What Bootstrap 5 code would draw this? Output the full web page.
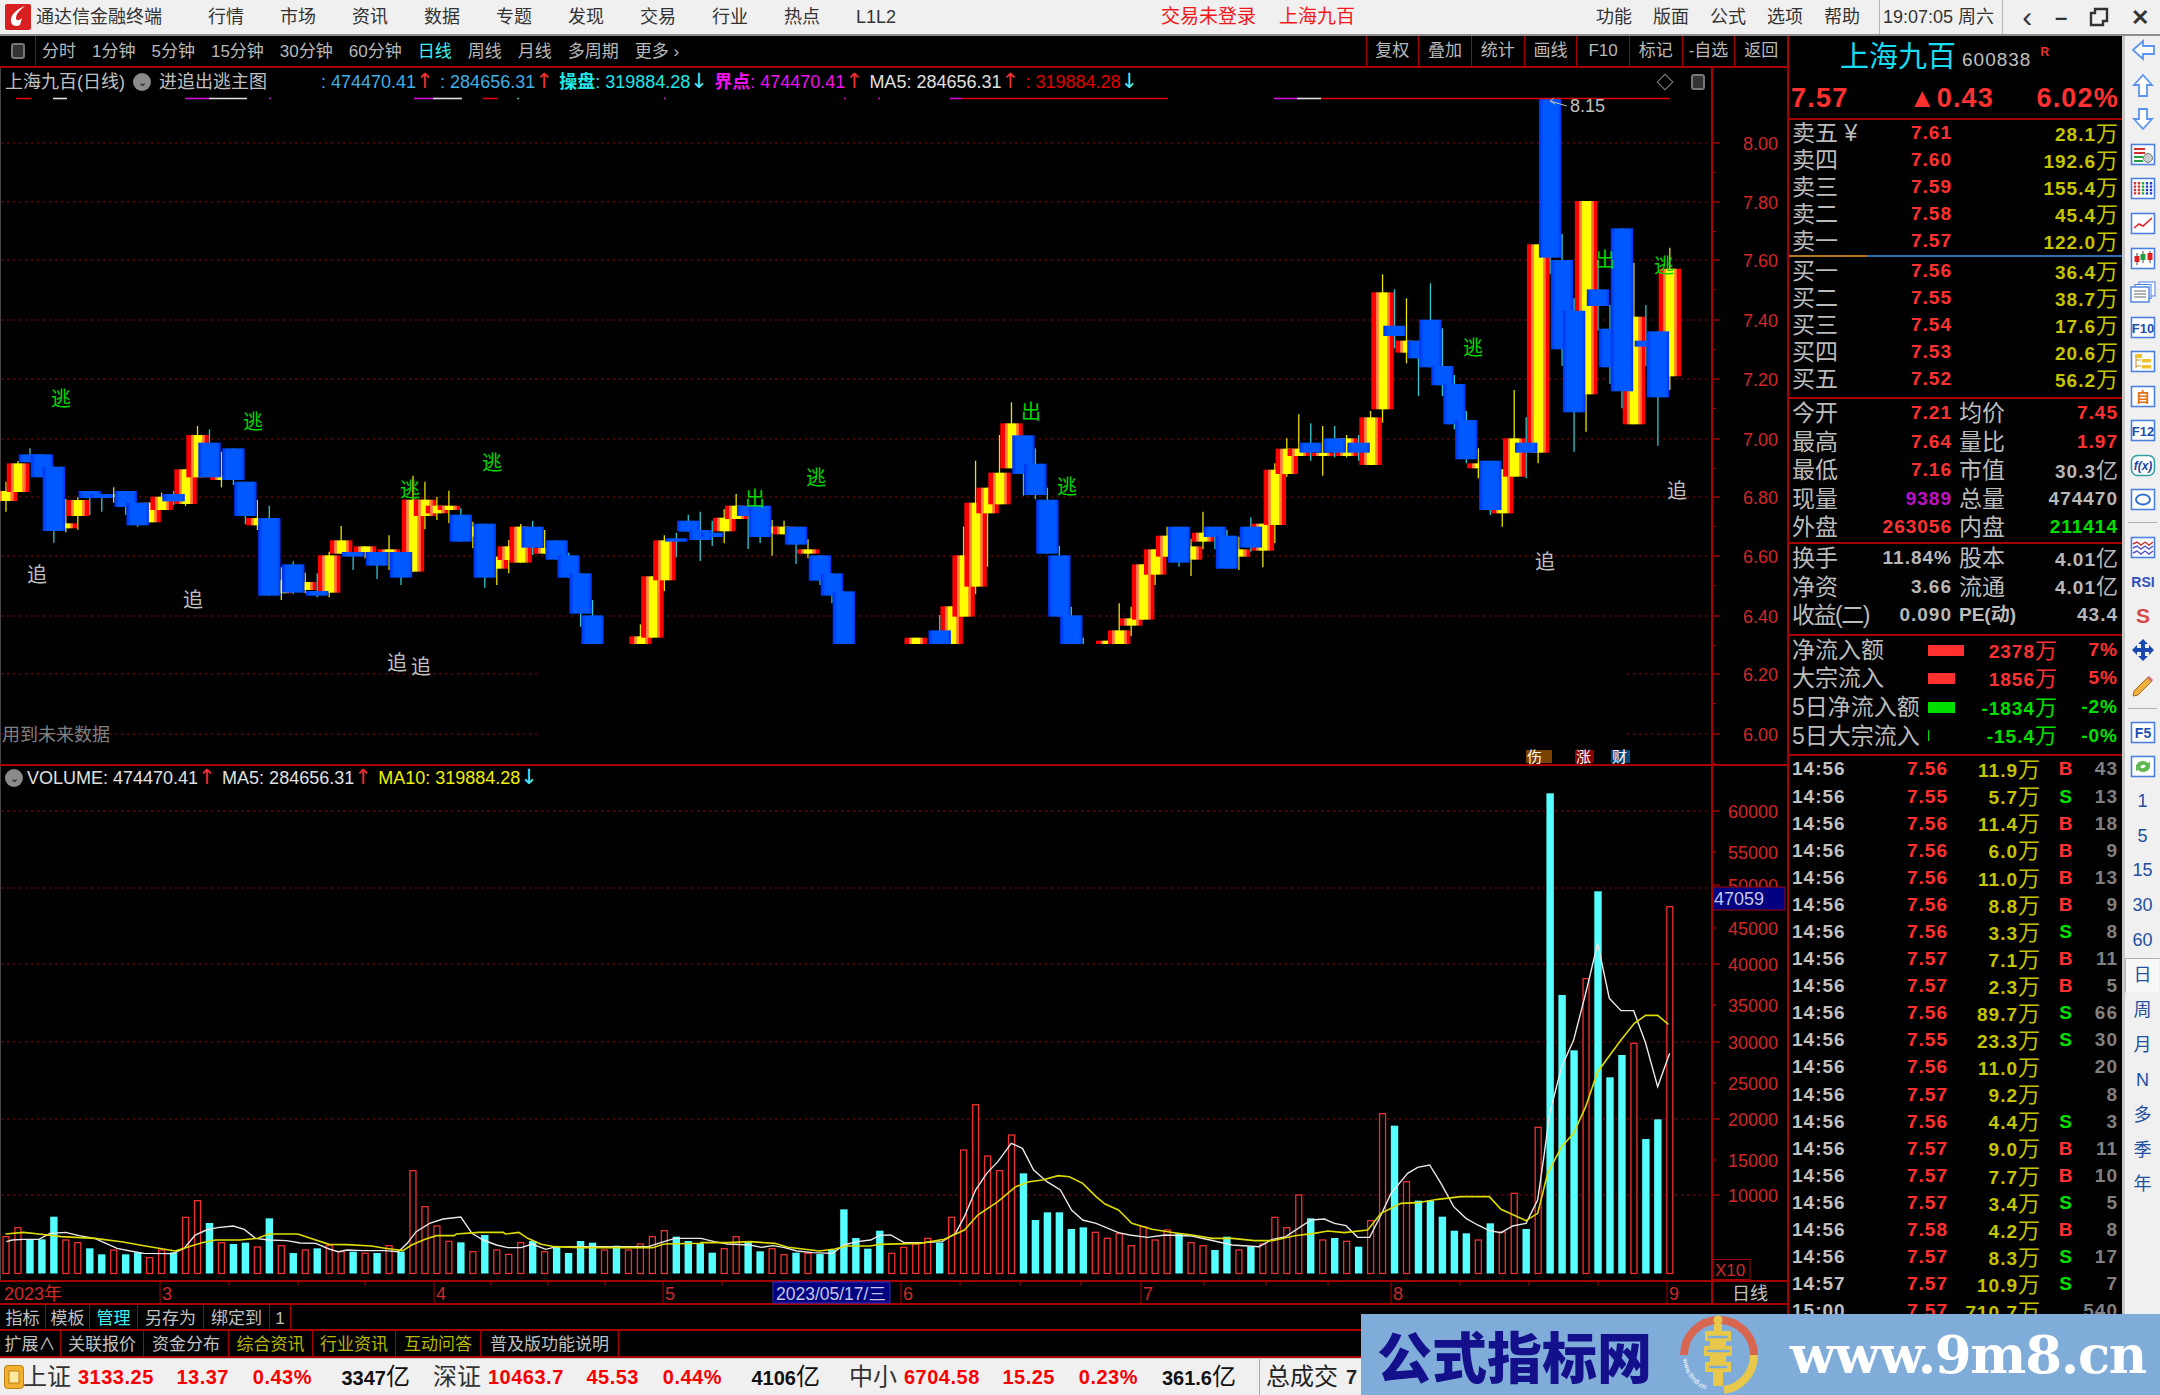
<!DOCTYPE html>
<html lang="zh-CN">
<head>
<meta charset="UTF-8">
<title>通达信金融终端</title>
<link href="https://cdn.jsdelivr.net/npm/bootstrap@5.3.0/dist/css/bootstrap.min.css" rel="stylesheet">
<style>
:root { --line: #a80000; --cjk: "Liberation Sans", "Noto Sans CJK SC", sans-serif; }
html, body { margin: 0; width: 2160px; height: 1395px; overflow: hidden; background: #000; }
body { font-family: var(--cjk); color: #c0c0c0; font-size: 17px; position: relative; }
svg { display: block; overflow: visible; }
svg text { font-family: var(--cjk); }

/* title bar */
.top-bar { height: 36px; background: #f0f0f0; border-bottom: 2px solid #8c8c8c; color: #333; font-size: 18px; flex-wrap: nowrap; justify-content: flex-start; }
.app-name { width: 203px; margin-left: 5px; gap: 5px; }
.menu-left { gap: 36px; }
.top-login { position: relative; color: #f01818; gap: 23px; margin-left: 265px; font-size: 19px; }
.menu-right { gap: 21px; margin-left: auto; }
.clock { border-left: 1px solid #b8b8b8; border-right: 1px solid #b8b8b8; height: 34px; margin-left: 19px; padding: 0 3px; width: 124px; font-size: 18px; white-space: nowrap; }
.win-ctl { width: 157px; justify-content: space-around; font-size: 22px; font-weight: 700; color: #333; padding-left: 8px; }
.win-back { font-size: 30px; font-weight: 400; line-height: 34px; height: 34px; }

/* chart toolbar */
.work { height: 1322px; }
.left-col { width: 1787px; }
.tool-row { height: 32px; border-bottom: 2px solid var(--line); font-size: 17px; color: #b8b8b8; }
.tool-icon { width: 36px; height: 30px; border-right: 1px solid var(--line); }
.tool-left { gap: 16px; margin-left: 6px; padding-top: 1px; }
.tool-on { color: #40f0f0; }
.tool-right { margin-left: auto; }
.tool-right span { height: 30px; width: 52.7px; border-left: 1px solid var(--line); display: flex; align-items: center; justify-content: center; }

/* chart panes */
.main-pane { height: 698px; border-bottom: 2px solid var(--line); }
.vol-pane { height: 516px; border-bottom: 2px solid var(--line); }
.plot-col { width: 1711px; border-left: 1px solid #444; }
.chart-title { height: 28px; font-size: 18px; white-space: nowrap; }
.vol-title { height: 24px; font-size: 18px; white-space: nowrap; }
.chip-dot { width: 18px; height: 18px; border-radius: 50%; background: #8a8a8a; color: #111; font-size: 11px; line-height: 18px; text-align: center; flex: none; }
.num-blue { color: #3fb0e8; } .num-cyan { color: #20e8e8; } .num-mag { color: #f010f0; } .num-red { color: #e00000; } .num-yel { color: #f0f000; } .num-wht { color: #e0e0e0; }
.arr-up, .arr-dn { font-family: "DejaVu Sans", sans-serif; font-size: 21px; font-weight: 400; line-height: 1; display: inline-block; width: 12px; text-align: center; overflow: visible; }
.arr-up { color: #f03030; } .arr-dn { color: #50e8f8; }
.seg { position: relative; flex: none; }
.seg-gap { margin-left: 12px; }
.seg-box { width: 14px; height: 16px; border: 2px solid #777; border-radius: 3px; background: #333; }
.diam { width: 12px; height: 12px; border: 1px solid #888; transform: rotate(45deg); }
.date-row { height: 23px; border-bottom: 2px solid var(--line); }
.date-cell { width: 76px; border-left: 2px solid var(--line); border-right: 0; color: #c0c0c0; font-size: 18px; line-height: 24px; text-align: center; }
.tab-row { height: 26px; border-bottom: 2px solid var(--line); font-size: 17px; }
.tab-row2 { height: 27px; }
.tab-row span { border-right: 1px solid var(--line); display: flex; align-items: center; justify-content: center; height: 100%; flex: none; padding-top: 3px; }
.tab-olive { color: #b8b800; }

/* quote panel */
.quote-panel { width: 335px; border-left: 2px solid var(--line); overflow: hidden; font-size: 23px; }
.q-head { height: 48px; gap: 6px; padding-bottom: 5px; }
.q-name { color: #18dcf0; font-size: 29px; margin-left: 51px; }
.q-code { color: #c0c0c0; font-size: 19px; letter-spacing: 1px; margin-top: 6px; }
.q-r { color: #f03030; font-size: 12px; font-weight: 700; margin: -12px 0 0 3px; }
.q-price { height: 36px; border-bottom: 2px solid var(--line); color: #ff3030; font-weight: 700; font-size: 27px; padding: 0 3px 5px 2px; letter-spacing: 1.2px; }
.q-row { display: flex; align-items: center; height: 27px; padding: 0 4px 0 3px; }
.q-num { font-weight: 700; font-size: 19px; letter-spacing: 1px; }
.q-lab { width: 100px; color: #bcbcbc; flex: none; }
.q-pr { width: 60px; text-align: right; color: #ff3030; flex: none; }
.q-vol { flex: 1; text-align: right; color: #c4c400; }
.q-wan { font-weight: 400; font-size: 22px; letter-spacing: 0; }
.q-split { height: 2px; background: linear-gradient(90deg, #b07820 78px, #2a70b0 78px); margin-bottom: 1px; }
.q-end { border-bottom: 2px solid var(--line); }
.st-row { height: 28.6px; }
.st-lab { width: 90px; color: #bcbcbc; flex: none; white-space: nowrap; }
.st-val { width: 70px; text-align: right; flex: none; white-space: nowrap; }
.st-lab2 { width: 70px; margin-left: 7px; color: #bcbcbc; flex: none; white-space: nowrap; }
.st-val2 { flex: 1; text-align: right; white-space: nowrap; }
.pe-lab { font-size: 19px; font-weight: 700; }
.eps-lab { letter-spacing: -1.5px; }
.c-red { color: #ff3030; } .c-mag { color: #c010c8; } .c-grn { color: #00e000; } .c-gry { color: #b8b8b8; }
.fl-lab { width: 136px; color: #bcbcbc; flex: none; white-space: nowrap; }
.fl-bar { width: 44px; flex: none; }
.fl-bar b { display: block; height: 11px; }
.fl-amt { width: 85px; text-align: right; flex: none; white-space: nowrap; }
.fl-pct { flex: 1; text-align: right; }
.tr-row { display: flex; align-items: center; height: 27.1px; padding: 0 4px 0 3px; }
.tr-time { width: 66px; color: #c0c0c0; flex: none; }
.tr-pr { width: 90px; text-align: right; color: #ff3030; flex: none; }
.tr-vol { width: 92px; text-align: right; color: #c4c400; flex: none; white-space: nowrap; }
.tr-bs { width: 26px; margin-left: 13px; text-align: center; flex: none; }
.tr-ct { flex: 1; text-align: right; color: #808080; }

/* side rail */
.side-rail { width: 38px; background: #f0f0f0; border-left: 3px solid #c8c8c8; }
.rail-cell { height: 34.55px; color: #2050a0; font-size: 18px; display: flex; align-items: center; justify-content: center; flex: none; }
.rail-num { height: 34.9px; }
.rail-first { margin-top: -3px; }
.rail-sep { height: 12.6px; display: flex; align-items: center; flex: none; padding: 0 3px; }
.rail-sep::after { content: ""; display: block; width: 100%; height: 1px; background: #b0b0b0; }
.rail-on { border: 1px solid #b0b0b0; border-right-color: #eee; border-bottom-color: #eee; background: #f8f8f8; }

/* status bar */
.status-bar { height: 37px; background: #f0f0f0; color: #222; font-size: 24px; white-space: nowrap; border-top: 1px solid #d0d0d0; }
.st-group { display: flex; align-items: center; flex: none; }
.st-name { width: 55px; flex: none; color: #333; }
.st-a { width: 78px; flex: none; }
.st-b { width: 73px; text-align: right; flex: none; }
.st-c { width: 83px; text-align: right; flex: none; }
.st-d { width: 98px; text-align: right; flex: none; font-weight: 700; font-size: 20px; color: #111; }
.st-d em { font-style: normal; font-weight: 400; font-size: 24px; }
.st-red { color: #f80000; font-weight: 700; font-size: 20px; letter-spacing: .5px; }

/* site stamp */
.site-stamp { position: absolute; left: 1361px; top: 1314px; width: 799px; height: 81px; background: #7facd9; display: flex; align-items: center; }
.stamp-cn { font-family: "Noto Sans CJK SC", sans-serif; font-weight: 900; color: #14108c; font-size: 55px; margin-left: 16px; width: 304px; letter-spacing: 0; line-height: 1; }
.stamp-logo { margin-left: -3px; flex: none; }
.stamp-url { font-family: "DejaVu Serif", serif; font-weight: 700; color: #fff; font-size: 53px; margin-left: 30px; letter-spacing: -1.3px; line-height: 1; white-space: nowrap; }
</style>
</head>
<body>

<nav class="navbar navbar-expand p-0 top-bar">
  <div class="d-flex align-items-center app-name">
    <svg width="26" height="26" viewBox="0 0 26 26"><rect width="26" height="26" rx="2" fill="#d82020"/><path d="M20 2 C10 6 5 12 6 18 C7 22 11 23 15 21 L17 14 C14 17 11 17 11 14 C11 10 15 6 20 2Z" fill="#fff"/></svg>
    <span>通达信金融终端</span>
  </div>
  <div class="d-flex menu-left">
    <span>行情</span><span>市场</span><span>资讯</span><span>数据</span><span>专题</span><span>发现</span><span>交易</span><span>行业</span><span>热点</span><span>L1L2</span>
  </div>
  <div class="d-flex top-login"><span>交易未登录</span><span>上海九百</span></div>
  <div class="d-flex menu-right"><span>功能</span><span>版面</span><span>公式</span><span>选项</span><span>帮助</span></div>
  <div class="d-flex align-items-center clock"><span>19:07:05 周六</span></div>
  <div class="d-flex align-items-center win-ctl">
    <span class="win-back">‹</span><span>–</span>
    <svg width="18" height="18" viewBox="0 0 18 18"><path d="M5 1h12v12h-4v4H1V5h4z" fill="none" stroke="#333" stroke-width="2.4"/></svg>
    <span>✕</span>
  </div>
</nav>

<div class="d-flex work">
  <div class="left-col d-flex flex-column">
    <div class="d-flex align-items-center tool-row">
      <div class="tool-icon d-flex align-items-center justify-content-center"><div class="seg-box"></div></div>
      <div class="d-flex tool-left">
        <span>分时</span><span>1分钟</span><span>5分钟</span><span>15分钟</span><span>30分钟</span><span>60分钟</span><span class="tool-on">日线</span><span>周线</span><span>月线</span><span>多周期</span><span>更多 ›</span>
      </div>
      <div class="d-flex tool-right"><span>复权</span><span>叠加</span><span>统计</span><span>画线</span><span>F10</span><span>标记</span><span>-自选</span><span>返回</span></div>
    </div>

    <div class="d-flex main-pane">
      <div class="plot-col d-flex flex-column">
        <div class="d-flex align-items-center chart-title">
          <span class="ms-1">上海九百(日线)</span><span class="chip-dot ms-2">⌄</span><span class="ms-2">进追出逃主图</span>
          <span class="num-blue seg" style="margin-left:54px">: 474470.41<span class="arr-up">↑</span></span>
          <span class="num-blue seg seg-gap">: 284656.31<span class="arr-up">↑</span></span>
          <span class="num-cyan seg seg-gap"><b>操盘</b>: 319884.28<span class="arr-dn">↓</span></span>
          <span class="num-mag seg seg-gap"><b>界点</b>: 474470.41<span class="arr-up">↑</span></span>
          <span class="num-wht seg seg-gap">MA5: 284656.31<span class="arr-up">↑</span></span>
          <span class="num-red seg seg-gap">: 319884.28<span class="arr-dn">↓</span></span>
          <span class="diam ms-auto"></span><span class="seg-box" style="margin:0 6px 0 20px"></span>
        </div>
        <svg id="kChart" width="1710" height="668" viewBox="0 96 1710 668"></svg>
      </div>
      <svg id="kAxis" width="76" height="696" viewBox="1711 68 76 696"></svg>
    </div>

    <div class="d-flex vol-pane">
      <div class="plot-col d-flex flex-column">
        <div class="d-flex align-items-center vol-title">
          <span class="chip-dot ms-1">⌄</span>
          <span class="num-wht ms-1">VOLUME: 474470.41<span class="arr-up">↑</span></span>
          <span class="num-wht seg-gap">MA5: 284656.31<span class="arr-up">↑</span></span>
          <span class="num-yel seg-gap">MA10: 319884.28<span class="arr-dn">↓</span></span>
        </div>
        <svg id="vChart" width="1710" height="490" viewBox="0 790 1710 490"></svg>
      </div>
      <svg id="vAxis" width="76" height="514" viewBox="1711 766 76 514"></svg>
    </div>

    <div class="d-flex date-row">
      <svg id="dateAxis" width="1711" height="21" viewBox="0 1282 1711 21"></svg>
      <div class="date-cell">日线</div>
    </div>

    <div class="d-flex tab-row">
      <span style="width:46px">指标</span><span style="width:44px">模板</span><span class="tool-on" style="width:48px">管理</span><span style="width:66px">另存为</span><span style="width:66px">绑定到</span><span style="width:21px">1</span>
    </div>
    <div class="d-flex tab-row tab-row2">
      <span style="width:61px">扩展∧</span><span style="width:83px">关联报价</span><span style="width:85px">资金分布</span><span class="tab-olive" style="width:84px">综合资讯</span><span class="tab-olive" style="width:83px">行业资讯</span><span class="tab-olive" style="width:85px">互动问答</span><span style="width:138px">普及版功能说明</span>
    </div>
  </div>

  <div class="quote-panel">
    <div class="d-flex align-items-center q-head"><span class="q-name">上海九百</span><span class="q-code">600838</span><span class="q-r">R</span></div>
    <div class="d-flex align-items-center justify-content-between q-price"><span>7.57</span><span style="margin-left:18px">▲0.43</span><span>6.02%</span></div>

    <div class="q-row"><span class="q-lab">卖五 ¥</span><span class="q-pr q-num">7.61</span><span class="q-vol q-num">28.1<span class="q-wan">万</span></span></div>
    <div class="q-row"><span class="q-lab">卖四</span><span class="q-pr q-num">7.60</span><span class="q-vol q-num">192.6<span class="q-wan">万</span></span></div>
    <div class="q-row"><span class="q-lab">卖三</span><span class="q-pr q-num">7.59</span><span class="q-vol q-num">155.4<span class="q-wan">万</span></span></div>
    <div class="q-row"><span class="q-lab">卖二</span><span class="q-pr q-num">7.58</span><span class="q-vol q-num">45.4<span class="q-wan">万</span></span></div>
    <div class="q-row"><span class="q-lab">卖一</span><span class="q-pr q-num">7.57</span><span class="q-vol q-num">122.0<span class="q-wan">万</span></span></div>
    <div class="q-split"></div>
    <div class="q-row"><span class="q-lab">买一</span><span class="q-pr q-num">7.56</span><span class="q-vol q-num">36.4<span class="q-wan">万</span></span></div>
    <div class="q-row"><span class="q-lab">买二</span><span class="q-pr q-num">7.55</span><span class="q-vol q-num">38.7<span class="q-wan">万</span></span></div>
    <div class="q-row"><span class="q-lab">买三</span><span class="q-pr q-num">7.54</span><span class="q-vol q-num">17.6<span class="q-wan">万</span></span></div>
    <div class="q-row"><span class="q-lab">买四</span><span class="q-pr q-num">7.53</span><span class="q-vol q-num">20.6<span class="q-wan">万</span></span></div>
    <div class="q-row"><span class="q-lab">买五</span><span class="q-pr q-num">7.52</span><span class="q-vol q-num">56.2<span class="q-wan">万</span></span></div>
    <div class="q-end pt-1"></div>

    <div class="q-row st-row"><span class="st-lab">今开</span><span class="st-val q-num c-red">7.21</span><span class="st-lab2">均价</span><span class="st-val2 q-num c-red">7.45</span></div>
    <div class="q-row st-row"><span class="st-lab">最高</span><span class="st-val q-num c-red">7.64</span><span class="st-lab2">量比</span><span class="st-val2 q-num c-red">1.97</span></div>
    <div class="q-row st-row"><span class="st-lab">最低</span><span class="st-val q-num c-red">7.16</span><span class="st-lab2">市值</span><span class="st-val2 q-num c-gry">30.3<span class="q-wan">亿</span></span></div>
    <div class="q-row st-row"><span class="st-lab">现量</span><span class="st-val q-num c-mag">9389</span><span class="st-lab2">总量</span><span class="st-val2 q-num c-gry">474470</span></div>
    <div class="q-row st-row"><span class="st-lab">外盘</span><span class="st-val q-num c-red">263056</span><span class="st-lab2">内盘</span><span class="st-val2 q-num c-grn">211414</span></div>
    <div class="q-end"></div>

    <div class="q-row st-row"><span class="st-lab">换手</span><span class="st-val q-num c-gry">11.84%</span><span class="st-lab2">股本</span><span class="st-val2 q-num c-gry">4.01<span class="q-wan">亿</span></span></div>
    <div class="q-row st-row"><span class="st-lab">净资</span><span class="st-val q-num c-gry">3.66</span><span class="st-lab2">流通</span><span class="st-val2 q-num c-gry">4.01<span class="q-wan">亿</span></span></div>
    <div class="q-row st-row"><span class="st-lab eps-lab">收益(二)</span><span class="st-val q-num c-gry">0.090</span><span class="st-lab2 pe-lab">PE(动)</span><span class="st-val2 q-num c-gry">43.4</span></div>
    <div class="q-end pt-1"></div>

    <div class="q-row st-row"><span class="fl-lab">净流入额</span><span class="fl-bar"><b style="width:36px;background:#ff3030"></b></span><span class="fl-amt q-num c-red">2378<span class="q-wan">万</span></span><span class="fl-pct q-num c-red">7%</span></div>
    <div class="q-row st-row"><span class="fl-lab">大宗流入</span><span class="fl-bar"><b style="width:27px;background:#ff3030"></b></span><span class="fl-amt q-num c-red">1856<span class="q-wan">万</span></span><span class="fl-pct q-num c-red">5%</span></div>
    <div class="q-row st-row"><span class="fl-lab">5日净流入额</span><span class="fl-bar"><b style="width:27px;background:#00e000"></b></span><span class="fl-amt q-num c-grn">-1834<span class="q-wan">万</span></span><span class="fl-pct q-num c-grn">-2%</span></div>
    <div class="q-row st-row"><span class="fl-lab">5日大宗流入</span><span class="fl-bar"><b style="width:1px;background:#00e000"></b></span><span class="fl-amt q-num c-grn">-15.4<span class="q-wan">万</span></span><span class="fl-pct q-num c-grn">-0%</span></div>
    <div class="q-end pt-1"></div>

    <div id="trades"></div>
  </div>

  <div class="side-rail d-flex flex-column" id="rail"></div>
</div>

<div class="d-flex align-items-center status-bar">
  <svg class="ms-1" width="20" height="24" viewBox="0 0 20 24"><rect x="0.5" y="0.5" width="19" height="23" rx="3" fill="#f0b030" stroke="#c08010"/><rect x="5" y="6" width="10" height="12" fill="#ffe9a0" stroke="#c08010"/></svg>
  <div class="st-group" style="margin-left:-1px">
    <span class="st-name">上证</span><span class="st-a st-red">3133.25</span><span class="st-b st-red">13.37</span><span class="st-c st-red">0.43%</span><span class="st-d">3347<em>亿</em></span>
  </div>
  <div class="st-group" style="margin-left:23px">
    <span class="st-name">深证</span><span class="st-a st-red">10463.7</span><span class="st-b st-red">45.53</span><span class="st-c st-red">0.44%</span><span class="st-d">4106<em>亿</em></span>
  </div>
  <div class="st-group" style="margin-left:29px">
    <span class="st-name">中小</span><span class="st-a st-red">6704.58</span><span class="st-b st-red">15.25</span><span class="st-c st-red">0.23%</span><span class="st-d">361.6<em>亿</em></span>
  </div>
  <span style="margin-left:23px;border-left:1px solid #aaa;padding-left:6px">总成交</span>
  <span class="ms-2 fw-bold" style="font-size:20px">7</span>
</div>

<div class="site-stamp">
  <span class="stamp-cn">公式指标网</span>
  <svg class="stamp-logo" width="82" height="80" viewBox="0 0 82 80">
    <path d="M6 40 A35 35 0 0 1 76 40" fill="none" stroke="#d8654f" stroke-width="8"/>
    <path d="M76 40 A35 35 0 0 1 46 75" fill="none" stroke="#e8c84a" stroke-width="8"/>
    <path id="stampArc" d="M5 44 A36 36 0 0 0 36 77" fill="none"/>
    <text font-size="7" fill="#fff"><textPath href="#stampArc">www.9m8.cn</textPath></text>
    <circle cx="40" cy="5" r="4.5" fill="#e8c84a"/>
    <path d="M36 9h8v7h9v10h-5v5h6v10h-6v6h5v10h-8v14h-10v-14h-8v-10h5v-6h-6v-10h6v-5h-5v-10h9z" fill="#e8c84a"/>
    <path d="M30 22h20M29 36h23M31 52h18" stroke="#7facd9" stroke-width="2.5"/>
  </svg>
  <span class="stamp-url">www.9m8.cn</span>
</div>

<script src="https://cdn.jsdelivr.net/npm/bootstrap@5.3.0/dist/js/bootstrap.bundle.min.js"></script>
<script>
// candle positions read off the reference, one column every 11.97px
const colX = i => 5 + 11.97 * i;
const RED = '#a80000', AXIS = '#d02828';

// [index, 0 up / 1 down, body top, body bottom, wick top, wick bottom]
const candlesA = [
[0,0,333,363,305,395],[1,0,250,336,243,336],[2,1,223,247,205,247],[3,1,223,292,223,292],[4,1,260,453,260,488],
[5,0,430,445,357,457],[6,0,360,408,352,449],[7,1,333,354,333,405],[8,1,342,354,342,395],[9,0,342,352,322,368],
[10,1,333,381,333,405],[11,1,368,436,368,440],[12,0,368,427,368,427],[13,0,350,390,338,390],[14,1,342,364,333,375],
[15,0,268,372,268,378],[16,0,165,292,138,292],[17,1,188,292,148,292],[18,0,290,300,215,322],[19,1,205,300,205,315],
[20,1,305,408,305,432],[21,0,414,436,360,450],[22,1,414,647,377,647],[23,0,600,640,562,660],[24,1,553,638,544,642],
[25,0,606,630,578,640],[26,1,633,647,580,652],[27,0,526,638,515,652],[28,0,481,521,438,521],[29,1,516,530,516,570],
[30,0,499,516,499,535],[31,1,516,557,516,597],[32,0,508,516,466,570],[33,1,516,593,516,615],[34,0,359,575,287,575],
[35,0,359,408,305,448],[36,0,377,400,350,420],[37,0,377,390,332,430],[38,1,404,485,385,485],[39,0,440,470,425,505],
[40,1,431,593,431,623],[41,0,530,566,530,615],[42,0,499,540,480,580],[43,0,440,548,432,548],[44,1,440,503,422,525],
[45,0,503,521,450,521],[46,1,481,539,481,539],[47,1,526,593,518,593],[48,1,580,701,580,740],[49,1,706,800,660,800],
[53,0,769,800,733,800],[54,0,589,773,589,773],[55,0,481,601,466,633],[56,1,475,485,458,532],[57,1,422,455,404,455],
[58,1,450,480,395,543],[59,1,458,471,422,498],[60,0,413,454,388,490],[61,0,377,417,342,417],[62,1,377,408,377,507],
[63,1,377,471,377,490],[64,0,440,460,420,527],[65,0,440,463,422,463],[66,1,440,494,440,552],[67,0,508,521,478,535],
[68,1,526,602,526,615],[69,1,580,647,580,670],[70,1,634,800,634,800],[76,0,773,800,773,800],[78,1,751,800,705,800],
[79,0,679,800,679,800],[80,0,526,710,440,710],[81,0,368,620,242,642],[82,0,323,400,323,560],[83,0,278,373,165,373],
[84,0,130,265,67,265],[85,1,166,282,166,347],[86,1,251,345,205,358],[87,1,359,521,323,521],[88,1,526,710,498,710],
[89,1,706,800,680,800],[90,1,800,800,773,800],[92,0,782,800,782,800],[93,0,751,800,670,800],[94,0,715,737,680,768],
[95,0,553,719,553,719],[96,0,508,584,508,615],[97,0,467,530,440,530],[98,1,440,548,440,560],[99,0,499,539,476,588],
[100,0,458,485,395,508],[101,1,440,471,440,508],[102,1,467,566,450,566],[103,0,508,530,470,570],[104,1,440,503,412,515],
[105,0,431,512,431,562],[106,0,269,435,250,490],[107,0,206,282,175,290],[108,0,206,228,103,228]
].map(c => [c[0], c[1], ...c.slice(2).map(v => 380 + v / 3)]);
const candlesB = [
[109,1,1088,1118,1030,1142],[110,0,1118,1128,1038,1187],[111,1,1075,1118,1038,1132],[112,0,1075,1128,1065,1132],
[113,1,1088,1118,1065,1142],[114,0,1012,1155,993,1155],[115,0,637,988,583,1028],[116,1,737,768,628,805],
[117,0,782,818,655,850],[118,1,782,835,782,948],[119,1,719,862,610,862],[120,1,858,916,745,948],[121,1,912,1033,885,1048],
[122,1,1020,1138,993,1150],[123,0,1150,1165,1105,1195],[124,1,1142,1290,1142,1305],[125,0,1168,1300,1168,1340],
[126,0,1075,1190,930,1190],[127,1,1088,1118,1012,1195],[128,0,493,1118,493,1150],[129,1,57,533,57,583],[130,1,540,808,462,858],
[131,1,692,997,655,1115],[132,0,363,943,363,1055],[133,1,628,678,540,752],[134,1,746,862,675,912],[135,1,445,934,445,985],
[136,0,710,1033,548,1033],[137,1,782,800,675,858],[138,1,754,952,754,1097],[139,0,566,889,503,930]
].map(c => [c[0], c[1], ...c.slice(2).map(v => 80 + v / 3)]);
const candles = candlesA.concat(candlesB);

function label(x, y, str, fill, size, anchor) {
  return `<text x="${x}" y="${y + 1.4}" fill="${fill}" font-size="${size}" text-anchor="${anchor || 'start'}" dominant-baseline="central">${str}</text>`;
}
function dotted(y, x1, x2) {
  return `<line x1="${x1}" x2="${x2}" y1="${y}" y2="${y}" stroke="#a00000" stroke-dasharray="2 4"/>`;
}

// main pane
let k = `<defs>
<linearGradient id="upFill" x1="0" x2="1" y1="0" y2="0">
<stop offset="0" stop-color="#ff0000"/><stop offset=".2" stop-color="#ff0000"/><stop offset=".2" stop-color="#ff6a50"/><stop offset=".33" stop-color="#ffa020"/><stop offset=".33" stop-color="#ffff00"/><stop offset=".7" stop-color="#ffff00"/><stop offset=".7" stop-color="#ffa020"/><stop offset=".84" stop-color="#ff5040"/><stop offset=".84" stop-color="#ff0000"/><stop offset="1" stop-color="#ff0000"/>
</linearGradient>
<linearGradient id="dnFill" x1="0" x2="1" y1="0" y2="0">
<stop offset="0" stop-color="#0030f0"/><stop offset=".2" stop-color="#0058ff"/><stop offset=".85" stop-color="#0058ff"/><stop offset="1" stop-color="#0030f0"/>
</linearGradient></defs>`;
[143, 202, 260, 320, 379, 439, 497, 556, 616, 674, 734].forEach(y => { k += dotted(y, 0, 1710); });
for (const type of [0, 1]) {
  candles.filter(c => c[1] === type).forEach(c => {
    const x = colX(c[0]);
    k += `<line x1="${x}" x2="${x}" y1="${c[4]}" y2="${c[5]}" stroke="${type ? '#30c8d0' : '#e8e000'}" stroke-width="1.3"/>`;
    if (c[3] > c[2]) k += `<rect x="${x - 11.2}" y="${c[2]}" width="22.4" height="${c[3] - c[2]}" fill="url(#${type ? 'dnFill' : 'upFill'})"/>`;
  });
}
// everything under y 644 is blanked out in the reference
k += `<rect x="537" y="644" width="1085" height="120" fill="#000"/>`;
[[15,30,'#e00000'],[52,66,'#e0e0e0'],[184,208,'#d010d0'],[208,246,'#e0e0e0'],[268,270,'#d010d0'],[413,432,'#d010d0'],[432,461,'#e0e0e0'],[482,496,'#e00000'],[516,518,'#30c8d0'],[663,665,'#d010d0'],[843,845,'#d010d0'],[877,879,'#d010d0'],[949,960,'#d010d0'],[960,1167,'#e00000'],[1273,1296,'#d010d0'],[1296,1320,'#e0e0e0'],[1320,1669,'#e00000']].forEach(s => {
  k += `<line x1="${s[0]}" x2="${s[1]}" y1="98.5" y2="98.5" stroke="${s[2]}" stroke-width="1.6"/>`;
});
[[60,399,'逃'],[252,422,'逃'],[491,463,'逃'],[409,490,'逃'],[815,478,'逃'],[1066,487,'逃'],[1472,348,'逃'],[1663,266,'逃'],[754,499,'出'],[1030,412,'出'],[1604,260,'出']].forEach(m => {
  k += label(m[0], m[1] - 1.4, m[2], '#00d800', 20, 'middle');
});
[[36,575],[192,600],[396,663],[420,667],[1676,491],[1544,562]].forEach(m => { k += label(m[0], m[1] - 1.4, '追', '#c0c0c0', 20, 'middle'); });
k += label(1, 734, '用到未来数据', '#808080', 18);
k += `<path d="M1566 106 L1549 101 M1553 98 L1549 101 L1554 104" fill="none" stroke="#c0c0c0"/>` + label(1569, 105, '8.15', '#c0c0c0', 18);
[[1525,26,'#7a4000','伤'],[1574,19,'#8a0000','涨'],[1610,19,'#004a80','财']].forEach(b => {
  k += `<rect x="${b[0]}" y="750" width="${b[1]}" height="13" fill="${b[2]}"/>` + label(b[0] + 1, 755, b[3], '#fff', 15);
});
document.getElementById('kChart').innerHTML = k;

// price axis
let ka = `<line x1="1712" x2="1712" y1="68" y2="764" stroke="${RED}" stroke-width="2"/>`;
[['8.00',143],['7.80',202],['7.60',260],['7.40',320],['7.20',379],['7.00',439],['6.80',497],['6.60',556],['6.40',616],['6.20',674],['6.00',734]].forEach(p => {
  ka += `<line x1="1712" x2="1720" y1="${p[1]}" y2="${p[1]}" stroke="${RED}" stroke-width="1.4"/>` + label(1778, p[1], p[0], AXIS, 18, 'end');
  ka += `<line x1="1712" x2="1716" y1="${p[1] + 29.5}" y2="${p[1] + 29.5}" stroke="${RED}"/>`;
});
document.getElementById('kAxis').innerHTML = ka;

// volume bars: positive = hollow red, negative = solid cyan
const volA = [410,383,-418,-418,-350,420,428,-445,-463,450,-463,-457,473,450,-457,352,302,-369,428,-432,-428,441,-355,437,-459,450,-445,436,455,-455,460,-459,437,-455,212,320,378,424,-427,455,-405,450,463,428,-423,455,-441,-459,-423,-428,450,-437,450,432,410,392,-410,-423];
const volB = [-580,-608,596,560,-575,-604,596,614,-608,610,-612,-600,-478,-564,-596,-542,610,592,582,565,-578,502,300,164,318,362,255,-370,-510,-487,-487,-537,-532,547,565,551,587,530,570,540,-550,578,587,-600,-560,600,-590,582,502,533,435];
const volC = [-1315,1380,-1374,1384,-1400,1322,1001,-1037,1205,-1262,-1262,-1310,-1352,-1360,1380,-1330,1356,1240,-1347,1042,-40,-645,-811,596,-334,-892,-825,790,-1077,-1018,380];
const bars = [...volA.map(v => [v > 0, 1100 + Math.abs(v) / 3]), ...volB.map(v => [v > 0, 1050 + Math.abs(v) / 3]), ...volC.map(v => [v > 0, 780 + Math.abs(v) / 3])];
const BASE = 1273.5;
let v = '';
[811, 888, 964, 1042, 1119, 1195].forEach(y => { v += dotted(y, 0, 1710); });
bars.forEach((b, i) => {
  const x = colX(i);
  v += b[0]
    ? `<rect x="${x - 3}" y="${b[1]}" width="6" height="${BASE - b[1]}" fill="#000" stroke="#f03030" stroke-width="1.3"/>`
    : `<rect x="${x - 3.7}" y="${b[1]}" width="7.4" height="${BASE - b[1]}" fill="#55ffff"/>`;
});
const z10 = p => [p[0] / 2.24, 1100 + p[1] / 3], z11 = p => [700 + p[0] / 2.24, 1050 + p[1] / 3], z9 = p => [1300 + p[0] / 3, 780 + p[1] / 3];
const ma5 = [
  ...[[12,425],[25,420],[50,418],[85,418],[110,400],[145,397],[175,407],[210,415],[235,430],[260,445],[290,453],[320,460],[385,461],[410,445],[435,405],[460,390],[485,383],[520,378],[545,388],[570,415],[600,420],[640,422],[670,429],[705,430],[735,447],[755,455],[775,450],[810,452],[860,452],[890,455],[910,430],[930,395],[960,370],[990,357],[1030,351],[1055,400],[1080,420],[1110,435],[1135,443],[1165,443],[1190,432],[1220,448],[1245,440],[1320,440],[1390,440],[1450,440],[1485,425],[1510,415],[1568,415]].map(z10),
  ...[[0,565],[30,575],[60,582],[110,585],[135,592],[160,587],[185,592],[215,603],[250,608],[295,610],[320,585],[350,575],[380,570],[400,556],[425,555],[455,578],[500,578],[540,575],[570,550],[590,500],[615,420],[640,370],[665,335],[695,280],[720,295],[745,360],[775,395],[805,420],[830,480],[855,510],[885,520],[935,548],[960,555],[1000,562],[1040,555],[1100,558],[1140,570],[1190,585],[1250,590],[1280,568],[1310,560]].map(z11),
  ...[[30,1320],[70,1317],[100,1330],[135,1337],[170,1372],[206,1372],[240,1305],[270,1240],[320,1180],[350,1162],[386,1155],[420,1210],[458,1280],[495,1315],[530,1335],[565,1352],[600,1358],[635,1338],[675,1330],[710,1260],[730,1120],[746,1000],[782,860],[818,780],[854,640],[890,490],[925,655],[960,692],[998,692],[1034,790],[1070,920],[1106,820]].map(z9)
];
const ma10 = [
  ...[[10,402],[50,397],[85,402],[135,410],[210,415],[270,425],[320,437],[390,453],[410,445],[450,428],[480,420],[535,420],[575,415],[600,402],[665,402],[700,418],[735,433],[775,434],[830,438],[860,445],[900,452],[920,435],[950,418],[975,407],[1015,407],[1020,402],[1070,397],[1125,397],[1130,402],[1160,397],[1180,415],[1210,433],[1240,440],[1300,443],[1460,443],[1485,432],[1568,430]].map(z10),
  ...[[0,578],[60,578],[110,575],[165,580],[195,592],[265,603],[300,597],[325,588],[380,588],[400,583],[490,580],[545,568],[590,540],[620,495],[665,455],[705,410],[735,395],[765,390],[800,377],[825,380],[855,400],[885,440],[905,462],[935,480],[965,520],[1010,538],[1060,548],[1100,555],[1145,565],[1190,565],[1240,572],[1280,572],[1330,557]].map(z11),
  ...[[40,1360],[80,1353],[130,1358],[200,1350],[240,1300],[300,1270],[350,1268],[410,1258],[480,1250],[565,1250],[600,1288],[675,1322],[710,1300],[740,1180],[782,1100],[818,1060],[854,980],[890,875],[960,780],[1000,730],[1034,706],[1070,706],[1102,733]].map(z9)
];
v += `<polyline points="${ma5.map(p => p.join(',')).join(' ')}" fill="none" stroke="#e8e8e8" stroke-width="1.4"/>`;
v += `<polyline points="${ma10.map(p => p.join(',')).join(' ')}" fill="none" stroke="#dcdc00" stroke-width="1.6"/>`;
document.getElementById('vChart').innerHTML = v;

// volume axis
let va = `<line x1="1712" x2="1712" y1="766" y2="1280" stroke="${RED}" stroke-width="2"/>`;
[['60000',811,1],['55000',852,0],['50000',885,1],['45000',928,0],['40000',964,1],['35000',1005,0],['30000',1042,1],['25000',1083,0],['20000',1119,1],['15000',1160,0],['10000',1195,1]].forEach(p => {
  va += `<line x1="1712" x2="${p[2] ? 1720 : 1716}" y1="${p[1]}" y2="${p[1]}" stroke="${RED}" stroke-width="1.4"/>` + label(1778, p[1], p[0], AXIS, 18, 'end');
});
va += `<rect x="1713" y="887" width="72" height="23" fill="#000080" stroke="${RED}"/>` + label(1714, 898, '47059', '#c8c8e8', 18);
va += `<rect x="1713" y="1259.5" width="37" height="20" fill="#000" stroke="${RED}"/>` + label(1715, 1269, 'X10', AXIS, 17);
document.getElementById('vAxis').innerHTML = va;

// date axis
let d = '';
[229,298,365,491,548,605,722,960,1020,1081,1204,1266,1328,1460,1529,1598].forEach(x => { d += `<line x1="${x}" x2="${x}" y1="1282" y2="1286" stroke="${RED}"/>`; });
[[160,'3'],[434,'4'],[663,'5'],[901,'6'],[1141,'7'],[1391,'8'],[1667,'9']].forEach(t => {
  d += `<line x1="${t[0]}" x2="${t[0]}" y1="1282" y2="1303" stroke="${RED}"/>` + label(t[0] + 2, 1293, t[1], AXIS, 18);
});
d += label(4, 1293, '2023年', AXIS, 18);
d += `<rect x="773" y="1282" width="117" height="21" fill="#000080" stroke="#3030c0"/>` + label(776, 1293, '2023/05/17/三', '#c8c8e8', 17.5);
document.getElementById('dateAxis').innerHTML = d;

// tick-by-tick list
const trades = [['14:56','7.56','11.9','B','43'],['14:56','7.55','5.7','S','13'],['14:56','7.56','11.4','B','18'],['14:56','7.56','6.0','B','9'],['14:56','7.56','11.0','B','13'],['14:56','7.56','8.8','B','9'],['14:56','7.56','3.3','S','8'],['14:56','7.57','7.1','B','11'],['14:56','7.57','2.3','B','5'],['14:56','7.56','89.7','S','66'],['14:56','7.55','23.3','S','30'],['14:56','7.56','11.0','','20'],['14:56','7.57','9.2','','8'],['14:56','7.56','4.4','S','3'],['14:56','7.57','9.0','B','11'],['14:56','7.57','7.7','B','10'],['14:56','7.57','3.4','S','5'],['14:56','7.58','4.2','B','8'],['14:56','7.57','8.3','S','17'],['14:57','7.57','10.9','S','7'],['15:00','7.57','710.7','','540']];
document.getElementById('trades').innerHTML = trades.map(t => {
  const big = parseFloat(t[2]) > 50;
  return `<div class="tr-row q-num"><span class="tr-time">${t[0]}</span><span class="tr-pr">${t[1]}</span><span class="tr-vol${big ? ' c-mag' : ''}">${t[2]}<span class="q-wan">万</span></span><span class="tr-bs ${t[3] === 'B' ? 'c-red' : 'c-grn'}">${t[3]}</span><span class="tr-ct">${t[4]}</span></div>`;
}).join('');

// side rail icons
const svgIcon = body => `<svg width="26" height="26" viewBox="0 0 26 26">${body}</svg>`;
const frame = '<rect x="1.5" y="3.5" width="23" height="20" fill="#fff" stroke="#4a80e0" stroke-width="1.6"/>';
const arrow = '#5a94f0';
const icons = [
  svgIcon(`<path d="M3 13 L13 4 V9 H24 V17 H13 V22Z" fill="#fff" stroke="${arrow}" stroke-width="1.8"/>`),
  svgIcon(`<path d="M13 3 L22 13 H17 V24 H9 V13 H4Z" fill="#fff" stroke="${arrow}" stroke-width="1.8"/>`),
  svgIcon(`<path d="M13 23 L22 13 H17 V3 H9 V13 H4Z" fill="#fff" stroke="${arrow}" stroke-width="1.8"/>`),
  svgIcon(frame + '<path d="M4 8h11M4 12h11" stroke="#d03030" stroke-width="2"/><path d="M4 16h9M4 20h9" stroke="#20a040" stroke-width="2"/><circle cx="18" cy="17" r="4.5" fill="#ccc" stroke="#777"/>'),
  svgIcon(frame + '<path d="M5 7v13M9 7v13" stroke="#d03030" stroke-width="2.4" stroke-dasharray="2.4 1"/><path d="M13 7v13" stroke="#20a040" stroke-width="2.4" stroke-dasharray="2.4 1"/><path d="M17 7v13M21 7v13" stroke="#2040c0" stroke-width="2.4" stroke-dasharray="2.4 1"/>'),
  svgIcon(frame + '<path d="M4 18 L9 14 L13 16 L22 8" fill="none" stroke="#e02020" stroke-width="1.6"/>'),
  svgIcon(frame + '<path d="M7 8v12M13 6v12M20 6v12" stroke="#444"/><rect x="4.5" y="11" width="5" height="6" fill="#e02020"/><rect x="10.5" y="9" width="5" height="6" fill="#20a040"/><rect x="17.5" y="8" width="5" height="7" fill="#e02020"/>'),
  svgIcon('<rect x="9" y="3" width="16" height="14" fill="#fff" stroke="#4a80e0"/><rect x="5" y="5.5" width="16" height="14" fill="#fff" stroke="#4a80e0"/><rect x="1" y="8" width="18" height="15" fill="#fff" stroke="#4a80e0" stroke-width="1.4"/><path d="M4 12h12M4 15h12M4 18h12" stroke="#666"/>'),
  svgIcon(frame + '<text x="13" y="19" font-size="13" text-anchor="middle" fill="#2050b0" font-weight="700">F10</text>'),
  svgIcon(frame + '<path d="M6 7v13M6 12h5M6 18h5" stroke="#c09020" fill="none"/><rect x="5" y="6" width="7" height="4" fill="#f0c030"/><rect x="12" y="11" width="9" height="3.5" fill="#f0c030"/><rect x="12" y="17" width="9" height="3.5" fill="#f0c030"/>'),
  svgIcon(frame + '<text x="13" y="19" font-size="14" text-anchor="middle" fill="#e07020" font-weight="700">自</text>'),
  svgIcon(frame + '<text x="13" y="19" font-size="13" text-anchor="middle" fill="#2050b0" font-weight="700">F12</text>'),
  svgIcon('<rect x="1.5" y="3.5" width="23" height="20" rx="6" fill="#fff" stroke="#30a0a0" stroke-width="1.6"/><text x="13" y="18" font-size="12" text-anchor="middle" fill="#2040a0" font-style="italic" font-weight="700">f(x)</text>'),
  svgIcon(frame + '<ellipse cx="13" cy="13.5" rx="7" ry="5" fill="none" stroke="#3070d0" stroke-width="2"/>'),
  'sep',
  svgIcon(frame + '<path d="M3 10 L7 8 L11 11 L15 8 L19 11 L23 8" fill="none" stroke="#d03030" stroke-width="1.4"/><path d="M3 14 L7 12 L11 15 L15 12 L19 15 L23 12" fill="none" stroke="#5050d0" stroke-width="1.4"/><path d="M3 19 L7 17 L11 20 L15 17 L19 20 L23 17" fill="none" stroke="#5050d0" stroke-width="1.4"/>'),
  svgIcon('<text x="13" y="19" font-size="14" text-anchor="middle" fill="#3050b8" font-weight="700">RSI</text>'),
  svgIcon('<text x="13" y="20" font-size="21" text-anchor="middle" fill="#d84848" font-weight="700">S</text>'),
  svgIcon('<path d="M13 2 L18 7 H15 V11 H19 V8 L24 13 L19 18 V15 H15 V19 H18 L13 24 L8 19 H11 V15 H7 V18 L2 13 L7 8 V11 H11 V7 H8Z" fill="#1848b0"/>'),
  svgIcon('<path d="M4 19 L18 5 L22 9 L8 23 L3 24Z" fill="#f0b040" stroke="#a07020"/><path d="M18 5 L22 9" stroke="#d07070" stroke-width="3"/>'),
  'sep',
  svgIcon(frame + '<text x="13" y="19" font-size="14" text-anchor="middle" fill="#2050b0" font-weight="700">F5</text>'),
  svgIcon(frame + '<path d="M6 13a7 6 0 0 1 12-3l2-1v6h-6l2-2a4 3 0 0 0-7 1z" fill="#60b850"/><path d="M20 14a7 6 0 0 1-12 3l-2 1v-6h6l-2 2a4 3 0 0 0 7-1z" fill="#60b850"/>')
];
const periods = ['1', '5', '15', '30', '60', '日', '周', '月', 'N', '多', '季', '年'];
let rail = '';
icons.forEach((ic, i) => {
  rail += ic === 'sep' ? '<div class="rail-sep"></div>' : `<div class="rail-cell${i === 0 ? ' rail-first' : ''}">${ic}</div>`;
});
periods.forEach(p => { rail += `<div class="rail-cell rail-num${p === '日' ? ' rail-on' : ''}">${p}</div>`; });
document.getElementById('rail').innerHTML = rail;
</script>
</body>
</html>
